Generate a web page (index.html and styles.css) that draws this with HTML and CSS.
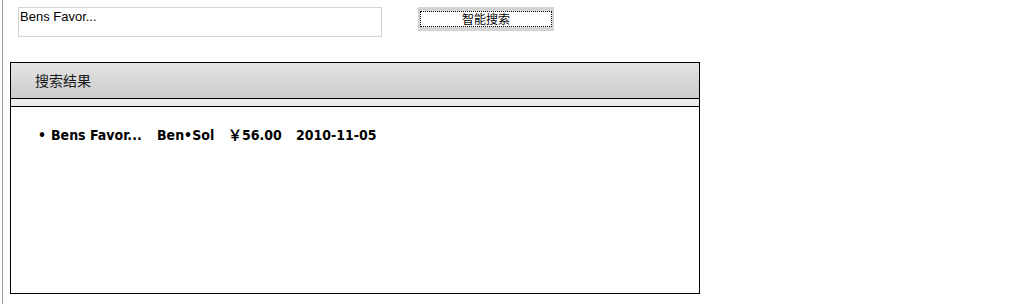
FILE: index.html
```html
<!DOCTYPE html>
<html lang="zh-CN">
<head>
  <meta charset="UTF-8" />
  <title>智能搜索</title>
  <link rel="stylesheet" href="styles.css">
</head>
<body>
  <div class="page">
    <div class="search-bar">
      <textarea class="search-box" readonly>Bens Favor...</textarea>
      <div class="search-btn"><span>智能搜索</span></div>
    </div>
    <div class="panel">
      <div class="panel-head">搜索结果</div>
      <div class="panel-strip"></div>
      <div class="panel-body">
        <ul class="results">
          <li>
            <span class="col-name">Bens Favor...</span>
            <span class="col-brand">Ben•Sol</span>
            <span class="col-price">￥56.00</span>
            <span class="col-date">2010-11-05</span>
          </li>
        </ul>
      </div>
    </div>
  </div>
</body>
</html>
```

FILE: styles.css
```css
html, body {
  margin: 0;
  background: #fff;
}
body {
  padding-left: 2px;
  font-family: "Liberation Sans", Arial, sans-serif;
}
.page {
  border-left: 1px solid #9a9a9a;
  min-height: 100vh;
  box-sizing: border-box;
  padding-top: 7px;
}
.search-bar {
  display: flex;
  align-items: flex-start;
  margin-left: 15px;
}
.search-box {
  width: 364px;
  height: 30px;
  box-sizing: border-box;
  border: 1px solid #d3d3d3;
  padding: 1px 1px;
  margin: 0;
  font-family: "Liberation Sans", Arial, sans-serif;
  font-size: 13px;
  line-height: 15px;
  color: #000;
  resize: none;
  overflow: hidden;
  outline: none;
}
.search-btn {
  margin-left: 36px;
  width: 136px;
  height: 24px;
  box-sizing: border-box;
  background: #d4d4d4;
  padding: 4px 2px;
  display: flex;
}
.search-btn span {
  flex: 1;
  background: #fff;
  border: 1px dotted #000;
  text-align: center;
  font-family: "Noto Sans CJK SC", sans-serif;
  font-size: 12px;
  line-height: 14px;
  color: #000;
}
.panel {
  margin-top: 25px;
  margin-left: 7px;
  width: 690px;
  box-sizing: border-box;
  border: 1px solid #000;
}
.panel-head {
  height: 35px;
  border-bottom: 1px solid #000;
  background: linear-gradient(#e6e6e6, #dadada 40%, #d1d1d1 75%, #cdcdcd);
  padding-left: 24px;
  font-family: "Noto Sans CJK SC", sans-serif;
  font-size: 14px;
  line-height: 35px;
  color: #1a1a1a;
}
.panel-strip {
  height: 7px;
  background: #ececec;
  border-bottom: 1px solid #000;
}
.panel-body {
  height: 186px;
}
.results {
  list-style: none;
  margin: 0;
  padding: 19px 0 0 27px;
}
.results li {
  display: flex;
  font-family: "DejaVu Sans Condensed", "DejaVu Sans", Verdana, sans-serif;
  font-weight: bold;
  font-size: 14px;
  line-height: 18px;
  color: #000;
}
.results li::before {
  content: "•";
  width: 13px;
}
.col-name { width: 106px; }
.col-brand { width: 71px; }
.col-price { width: 68px; }
```
